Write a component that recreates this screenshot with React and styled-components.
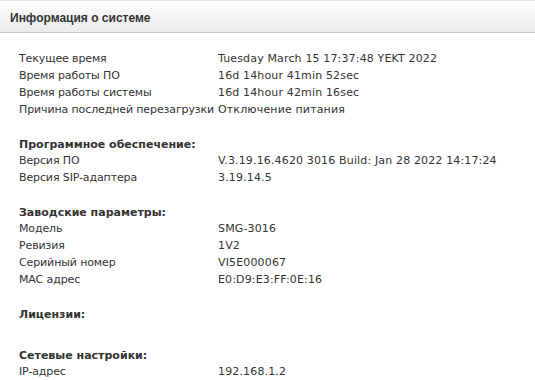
import React from 'react';
import styled, { createGlobalStyle } from 'styled-components';

const GlobalStyle = createGlobalStyle`
  html, body {
    margin: 0;
    padding: 0;
    background: #ffffff;
  }
  body {
    font-family: "DejaVu Sans", Verdana, sans-serif;
    font-size: 11px;
    color: #333333;
  }
`;

const Page = styled.div`
  width: 535px;
  height: 380px;
  overflow: hidden;
`;

const PanelHeader = styled.div`
  height: 33px;
  display: flex;
  align-items: center;
  padding: 2px 10px 0;
  box-sizing: border-box;
  border-top: 1px solid #e2e2e2;
  border-bottom: 1px solid #c9c9c9;
  background: linear-gradient(to bottom, #fdfdfd 0%, #f3f3f3 60%, #ebebeb 100%);
`;

const PanelTitle = styled.h1`
  margin: 0;
  font-family: "Liberation Sans", Arial, sans-serif;
  font-size: 12px;
  font-weight: bold;
  color: #333333;
`;

const Content = styled.div`
  padding: 17px 0 0 19px;
`;

const Section = styled.section`
  margin-bottom: ${(p) => p.$gap || 17}px;
`;

const SectionTitle = styled.div`
  font-weight: bold;
  line-height: 17px;
  padding-top: 1px;
  margin-bottom: -1px;
`;

const InfoTable = styled.div`
  display: grid;
  grid-template-columns: 199px auto;
  line-height: 17px;
  white-space: nowrap;
`;

const Label = styled.div`
  letter-spacing: -0.12px;
`;

const Value = styled.div`
  letter-spacing: 0.15px;
`;

const sections = [
  {
    rows: [
      ['Текущее время', 'Tuesday March 15 17:37:48 YEKT 2022'],
      ['Время работы ПО', '16d 14hour 41min 52sec'],
      ['Время работы системы', '16d 14hour 42min 16sec'],
      ['Причина последней перезагрузки', 'Отключение питания'],
    ],
  },
  {
    title: 'Программное обеспечение:',
    rows: [
      ['Версия ПО', 'V.3.19.16.4620 3016 Build: Jan 28 2022 14:17:24'],
      ['Версия SIP-адаптера', '3.19.14.5'],
    ],
  },
  {
    title: 'Заводские параметры:',
    rows: [
      ['Модель', 'SMG-3016'],
      ['Ревизия', '1V2'],
      ['Серийный номер', 'VI5E000067'],
      ['MAC адрес', 'E0:D9:E3:FF:0E:16'],
    ],
  },
  { title: 'Лицензии:', rows: [], gap: 24 },
  {
    title: 'Сетевые настройки:',
    rows: [['IP-адрес', '192.168.1.2']],
  },
];

export default function App() {
  return (
    <Page>
      <GlobalStyle />
      <PanelHeader>
        <PanelTitle>Информация о системе</PanelTitle>
      </PanelHeader>
      <Content>
        {sections.map((s, i) => (
          <Section key={i} $gap={s.gap}>
            {s.title && <SectionTitle>{s.title}</SectionTitle>}
            {s.rows.length > 0 && (
              <InfoTable>
                {s.rows.map(([k, v]) => (
                  <React.Fragment key={k}>
                    <Label>{k}</Label>
                    <Value>{v}</Value>
                  </React.Fragment>
                ))}
              </InfoTable>
            )}
          </Section>
        ))}
      </Content>
    </Page>
  );
}
